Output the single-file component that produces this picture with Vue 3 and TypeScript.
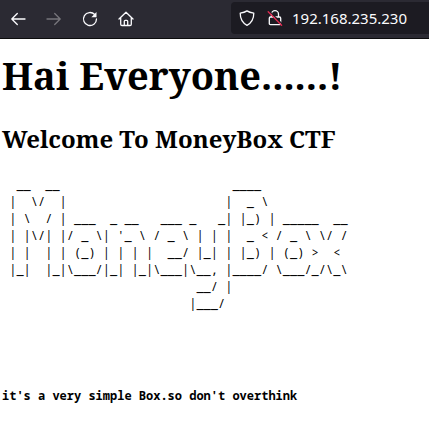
<script setup lang="ts">
import { ref } from 'vue'

const address = ref('192.168.235.230')

const banner: string = [
  String.raw`  __  __                        ____`,
  String.raw` |  \/  |                      |  _ \ `,
  String.raw` | \  / | ___  _ __   ___ _   _| |_) | _____  __`,
  String.raw` | |\/| |/ _ \| '_ \ / _ \ | | |  _ < / _ \ \/ /`,
  String.raw` | |  | | (_) | | | |  __/ |_| | |_) | (_) >  <`,
  String.raw` |_|  |_|\___/|_| |_|\___|\__, |____/ \___/_/\_\ `,
  String.raw`                           __/ |`,
  String.raw`                          |___/`,
].join('\n')
</script>

<template>
  <div class="browser">
    <header class="toolbar">
      <nav class="controls" aria-label="Navigation">
        <button type="button" aria-label="Back">
          <svg viewBox="0 0 16 16"><path d="M15 8H2M7.3 2.5 1.8 8l5.5 5.5" /></svg>
        </button>
        <button type="button" aria-label="Forward" disabled>
          <svg viewBox="0 0 16 16"><path d="M1 8h13M8.7 2.5 14.2 8l-5.500 5.500" /></svg>
        </button>
        <button type="button" aria-label="Reload">
          <svg viewBox="0 0 16 16">
            <path d="M12.7 3.500A6.500 6.500 0 1 0 14.500 8" />
            <path class="solid" d="M14.500 1v5.200H9.300z" />
          </svg>
        </button>
        <button type="button" aria-label="Home">
          <svg viewBox="0 0 16 16">
            <path d="M1 8 8 1.2 15 8M2.7 6.8v6.4q0 1.3 1.3 1.3h8q1.3 0 1.3-1.3V6.8M6.3 14.3v-4q0-.9.9-.9h1.6q.9 0 .9.9v4" />
          </svg>
        </button>
      </nav>
      <div class="address">
        <div class="badges">
          <svg viewBox="0 0 16 16" aria-hidden="true">
            <path d="M8 .9C6.2 2.200 4 2.800 1.200 3.100c0 5.600 1.900 9.800 6.800 12.200 4.900-2.400 6.800-6.600 6.800-12.200C12 2.800 9.800 2.200 8 .9z" />
          </svg>
          <svg viewBox="0 0 16 16" aria-hidden="true">
            <path d="M4.500 7V4.200a3.500 3.500 0 0 1 7 0V7M3.500 7h9q1.200 0 1.200 1.200v5.300q0 1.200-1.200 1.200h-9q-1.200 0-1.200-1.200V8.200Q2.300 7 3.500 7z" />
            <path class="gap" d="M2.300 1.100 15.500 14.300" />
            <path class="slash" d="M1.200 1.700 14.600 15.200" />
          </svg>
        </div>
        <input v-model="address" type="text" aria-label="Address" spellcheck="false" />
      </div>
    </header>
    <main class="page">
      <h1>Hai Everyone......!</h1>
      <h2>Welcome To MoneyBox CTF</h2>
      <pre class="banner">{{ banner }}</pre>
      <p class="note">it's a very simple Box.so don't overthink</p>
    </main>
  </div>
</template>

<style>
body {
  background: #fff;
}
</style>

<style scoped>
.browser {
  overflow: hidden;
  color: #000;
}

.toolbar {
  display: flex;
  gap: 97px;
  height: 38px;
  background: #2b2a33;
  border-bottom: 1px solid #0c0c0d;
}

.controls {
  display: flex;
  align-items: center;
  gap: 20px;
  padding-left: 10px;
}

button {
  display: flex;
  padding: 0;
  border: 0;
  background: none;
  color: #fbfbfe;
}

button:disabled {
  color: #77767c;
}

svg {
  flex: none;
  width: 16px;
  height: 16px;
  fill: none;
  stroke: currentColor;
  stroke-width: 1.3;
  stroke-linecap: round;
  stroke-linejoin: round;
}

.solid {
  fill: currentColor;
  stroke: none;
}

.gap {
  stroke: #1c1b22;
}

.slash {
  stroke: #e22850;
}

.address {
  display: flex;
  flex: 1;
  align-items: center;
  gap: 9px;
  min-width: 0;
  margin: 2px 0 4px;
  padding-left: 8px;
  border-radius: 4px 0 0 4px;
  background: #1c1b22;
  color: #fbfbfe;
}

.badges {
  display: flex;
  gap: 12px;
}

input {
  flex: 1;
  min-width: 0;
  padding: 0;
  border: 0;
  outline: 0;
  background: none;
  color: inherit;
  font: 15px "Noto Sans", sans-serif;
}

.page {
  padding: 8px 2px;
}

h1,
h2 {
  margin: 0;
  font-family: "Noto Serif", "DejaVu Serif", serif;
  font-weight: 700;
}

h1 {
  font-size: 38px;
  line-height: 56px;
}

h2 {
  margin-top: 20px;
  font-size: 24px;
  line-height: 32px;
}

.banner,
.note {
  margin: 0;
  font-family: "Noto Sans Mono", "DejaVu Sans Mono", monospace;
  font-size: 12px;
  line-height: 17px;
}

.banner {
  margin-top: 21px;
}

.note {
  margin-top: 75px;
  font-weight: 700;
}
</style>
